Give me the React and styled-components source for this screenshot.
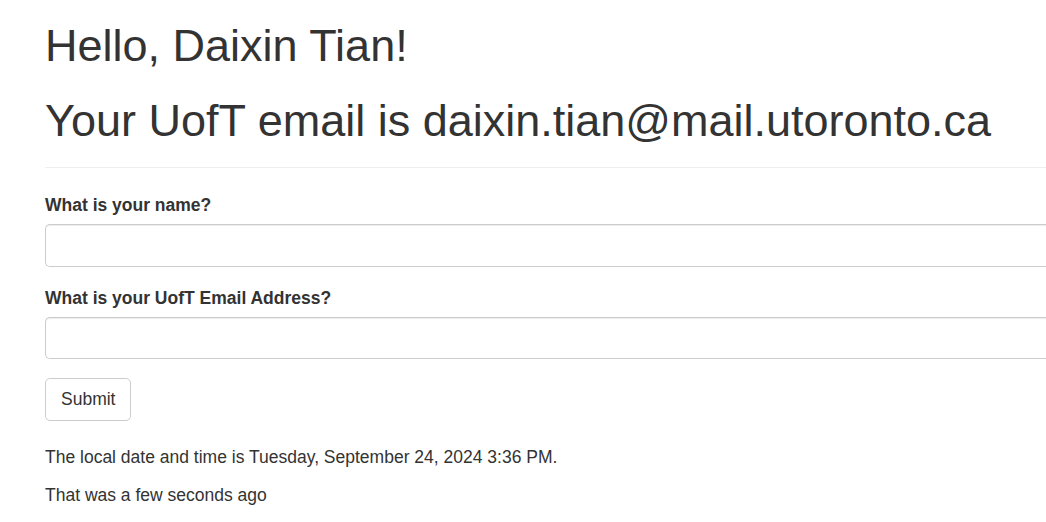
import styled, { createGlobalStyle } from "styled-components"

const GlobalStyle = createGlobalStyle`
html, body {
    margin: 0;
    padding: 0;
    overflow: hidden;
    background: #ffffff;
}
body {
    font-family: "Liberation Sans", Arial, Helvetica, sans-serif;
    font-size: 17.5px;
    line-height: 25px;
    color: #333333;
}
* {
    box-sizing: border-box;
}
`

export default function App() {
    return (
        <>
            <GlobalStyle />
            <Container>
                <PageHeader>
                    <Title>Hello, Daixin Tian!</Title>
                    <Title>Your UofT email is daixin.tian@mail.utoronto.ca</Title>
                </PageHeader>

                <Form onSubmit={(e) => e.preventDefault()}>
                    <FormGroup>
                        <Label htmlFor="name">What is your name?</Label>
                        <Input id="name" type="text" />
                    </FormGroup>
                    <FormGroup>
                        <Label htmlFor="email">What is your UofT Email Address?</Label>
                        <Input id="email" type="text" />
                    </FormGroup>
                    <Button type="submit">Submit</Button>
                </Form>

                <Text>The local date and time is Tuesday, September 24, 2024 3:36 PM.</Text>
                <Text>That was a few seconds ago</Text>
            </Container>
        </>
    )
}

const Container = styled.div`
width: 100%;
padding: 0 0 0 45px;
`

const PageHeader = styled.div`
padding-top: 21px;
padding-bottom: 22px;
border-bottom: 1px solid #eeeeee;
margin-bottom: 25px;
`

const Title = styled.h1`
font-size: 45px;
line-height: 49.5px;
font-weight: 400;
color: #333333;
margin: 0;
white-space: nowrap;
& + & {
    margin-top: 25px;
}
`

const Form = styled.form`
margin-bottom: 24px;
`

const FormGroup = styled.div`
margin-bottom: 18.75px;
`

const Label = styled.label`
display: block;
font-weight: 700;
max-width: 100%;
margin-bottom: 6.25px;
`

const Input = styled.input`
display: block;
width: 100%;
height: 42.5px;
padding: 7.5px 15px;
font-family: inherit;
font-size: 17.5px;
color: #555555;
background: #ffffff;
border: 1px solid #cccccc;
border-right: none;
border-radius: 5px 0 0 5px;
box-shadow: inset 0 1px 1px rgba(0, 0, 0, 0.075);
outline: none;
`

const Button = styled.button`
display: inline-block;
height: 42.5px;
padding: 7.5px 15px;
font-family: inherit;
font-size: 17.5px;
line-height: 25px;
color: #333333;
background: #ffffff;
border: 1px solid #cccccc;
border-radius: 5px;
cursor: pointer;
`

const Text = styled.p`
margin: 0 0 13px;
`
